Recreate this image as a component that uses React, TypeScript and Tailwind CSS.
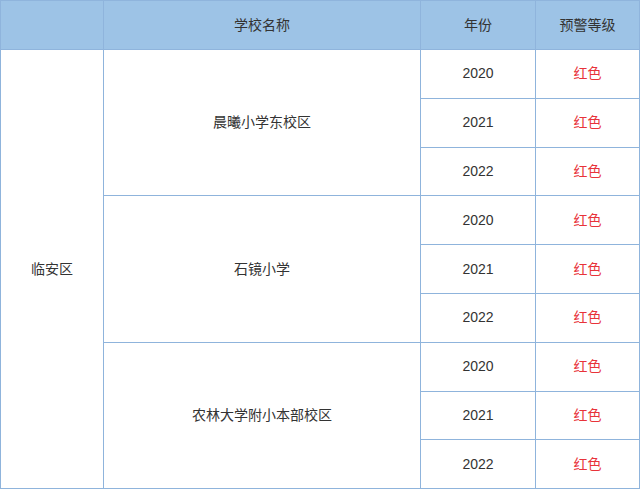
const schools = [
  { name: "晨曦小学东校区", years: ["2020", "2021", "2022"] },
  { name: "石镜小学", years: ["2020", "2021", "2022"] },
  { name: "农林大学附小本部校区", years: ["2020", "2021", "2022"] },
];

const cell = "border border-[#8fb4dc] text-center align-middle p-0";

export default function App() {
  return (
    <div
      className="w-[640px] h-[490px] bg-white text-[14px] text-[#333]"
      style={{ fontFamily: '"Liberation Sans", "Noto Sans CJK SC", sans-serif' }}
    >
      <table className="w-[639px] border-collapse table-fixed">
        <colgroup>
          <col className="w-[103px]" />
          <col className="w-[317px]" />
          <col className="w-[115px]" />
          <col className="w-[104px]" />
        </colgroup>
        <thead>
          <tr className="h-[49px] bg-[#9dc3e6]">
            <th className={`${cell} font-normal`}></th>
            <th className={`${cell} font-normal`}>学校名称</th>
            <th className={`${cell} font-normal`}>年份</th>
            <th className={`${cell} font-normal`}>预警等级</th>
          </tr>
        </thead>
        <tbody>
          {schools.map((s, si) =>
            s.years.map((y, yi) => (
              <tr key={`${si}-${yi}`} className="h-[48.8px]">
                {si === 0 && yi === 0 && (
                  <td className={cell} rowSpan={9}>
                    临安区
                  </td>
                )}
                {yi === 0 && (
                  <td className={cell} rowSpan={3}>
                    {s.name}
                  </td>
                )}
                <td className={cell}>{y}</td>
                <td className={`${cell} text-[#e8333a]`}>红色</td>
              </tr>
            ))
          )}
        </tbody>
      </table>
    </div>
  );
}
